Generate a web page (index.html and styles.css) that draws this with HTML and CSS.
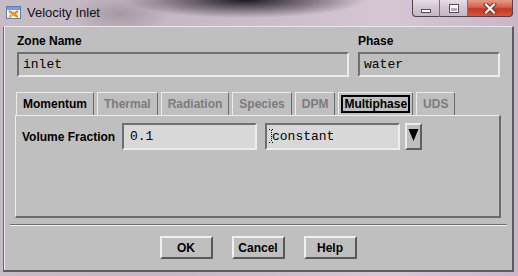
FILE: index.html
```html
<!DOCTYPE html>
<html lang="en">
<head>
  <meta charset="UTF-8" />
  <title>Velocity Inlet</title>
  <link rel="stylesheet" href="styles.css">
</head>
<body>
  <div class="titlebar">
    <svg class="app-icon" width="15" height="13" viewBox="0 0 15 13">
      <rect x="0.5" y="0.5" width="14" height="12" fill="#f4f4f4" stroke="#5a7fb0"/>
      <rect x="1" y="1" width="13" height="3" fill="#6fa0dc"/>
      <path d="M3 5 L12 11 M12 5 L3 11" stroke="#f08a1c" stroke-width="2.2"/>
      <path d="M3 11 L7 8" stroke="#f6c040" stroke-width="1.4"/>
    </svg>
    <span class="title">Velocity Inlet</span>
    <div class="caption">
      <div class="cap-btn cap-min"><span class="glyph-min"></span></div>
      <div class="cap-btn cap-max"><span class="glyph-max"></span></div>
      <div class="cap-btn cap-close">
        <svg width="14" height="11" viewBox="0 0 14 11">
          <path d="M3 1.5 L11 9.5 M11 1.5 L3 9.5" stroke="#6a2a20" stroke-width="4" stroke-linecap="square"/>
          <path d="M3 1.5 L11 9.5 M11 1.5 L3 9.5" stroke="#ffffff" stroke-width="2.2" stroke-linecap="square"/>
        </svg>
      </div>
    </div>
  </div>

  <div class="client">
    <div class="zone-row">
      <div class="group zone-group">
        <div class="label">Zone Name</div>
        <div class="field">inlet</div>
      </div>
      <div class="group phase-group">
        <div class="label">Phase</div>
        <div class="field">water</div>
      </div>
    </div>

    <div class="tabs">
      <div class="tab">Momentum</div>
      <div class="tab disabled">Thermal</div>
      <div class="tab disabled">Radiation</div>
      <div class="tab disabled">Species</div>
      <div class="tab disabled">DPM</div>
      <div class="tab focused"><span class="focus-ring">Multiphase</span></div>
      <div class="tab disabled">UDS</div>
    </div>

    <div class="tab-panel">
      <div class="vf-row">
        <div class="label vf-label">Volume Fraction</div>
        <div class="field light vf-input">0.1</div>
        <div class="field light vf-select">
          constant
          <svg class="ibeam" width="5" height="14" viewBox="0 0 5 14">
            <path d="M0 0.5 H2 M3 0.5 H5 M2.5 1 V13 M0 13.5 H2 M3 13.5 H5" stroke="#000" stroke-width="1" stroke-dasharray="1 1"/>
          </svg>
        </div>
        <div class="arrow-btn">
          <svg width="11" height="15" viewBox="0 0 11 15">
            <path d="M0.5 2 H10.5 L5.5 14 Z" fill="#000"/>
          </svg>
        </div>
      </div>
    </div>

    <div class="separator"></div>

    <div class="buttons">
      <button class="btn">OK</button>
      <button class="btn">Cancel</button>
      <button class="btn">Help</button>
    </div>
  </div>
</body>
</html>
```

FILE: styles.css
```css
* {
  box-sizing: border-box;
}
body {
  margin: 0;
  width: 518px;
  height: 276px;
  overflow: hidden;
  font-family: "Liberation Sans", Arial, sans-serif;
  display: flex;
  flex-direction: column;
  background:
    radial-gradient(ellipse 120px 18px at 245px 0, rgba(12, 8, 12, 0.9), rgba(12, 8, 12, 0)),
    radial-gradient(ellipse 50px 20px at 120px 14px, rgba(110, 95, 108, 0.35), rgba(110, 95, 108, 0)),
    linear-gradient(90deg, #c6bcc5 0%, #c4b6c2 30%, #cdbecb 55%, #d6c6d4 75%, #cbb6c8 100%);
}

/* title bar */
.titlebar {
  height: 26px;
  display: flex;
  align-items: center;
  padding: 0 5px 2px 6px;
}
.app-icon {
  margin-right: 6px;
  flex: none;
}
.title {
  font-size: 13px;
  color: #111;
}
.caption {
  margin-left: auto;
  align-self: flex-start;
  display: flex;
  height: 17px;
}
.cap-btn {
  height: 17px;
  display: flex;
  align-items: center;
  justify-content: center;
  border-bottom: 1px solid #4c424b;
}
.cap-min,
.cap-max {
  width: 28px;
  background: linear-gradient(#e7dde5, #d3c5d1 50%, #c6b6c4);
  border-right: 1px solid #7b6e79;
}
.cap-min {
  border-left: 1px solid #4c424b;
  border-bottom-left-radius: 4px;
}
.cap-close {
  width: 45px;
  background: linear-gradient(#e69a86, #d4604a 45%, #c4381f 55%, #d6563a);
  border-right: 1px solid #4c424b;
  border-bottom-right-radius: 4px;
}
.glyph-min {
  width: 10px;
  height: 4px;
  margin-top: 5px;
  background: #fff;
  border: 1px solid #4e4e5a;
}
.glyph-max {
  width: 10px;
  height: 9px;
  border: 1px solid #4e4e5a;
  box-shadow: inset 0 0 0 1px #fff, inset 0 2px 0 1px #fff;
  background: #b9aab7;
}

/* dialog client area */
.client {
  margin: 0 4px 0 3px;
  height: 246px;
  background: #bfbfbf;
  border-style: solid;
  border-width: 1px 2px 2px 1px;
  border-color: #e9e9e9 #5e5e5e #5e5e5e #6a6a6a;
  box-shadow: inset 1px 0 0 #ececec;
  padding: 7px 11px 0 11px;
  display: flex;
  flex-direction: column;
}
.label {
  font-size: 12px;
  font-weight: bold;
  line-height: 14px;
  color: #000;
}
.zone-row {
  display: flex;
  gap: 9px;
  padding: 0 1px 0 2px;
}
.zone-group {
  flex: 1;
}
.phase-group {
  width: 142px;
}
.group .label {
  margin-bottom: 4px;
}
.field {
  height: 25px;
  border: 2px solid;
  border-color: #6f6f6f #ececec #ececec #6f6f6f;
  padding: 0 4px;
  font-family: "Liberation Mono", "DejaVu Sans Mono", monospace;
  font-size: 13px;
  line-height: 21px;
  color: #000;
  background: #bfbfbf;
}
.field.light {
  background: #d8d8d8;
  height: 27px;
  line-height: 23px;
}

/* tabs */
.tabs {
  display: flex;
  gap: 3px;
  margin-top: 15px;
  padding-left: 1px;
}
.tab {
  height: 23px;
  padding: 0 6px;
  border: 1px solid;
  border-bottom: none;
  border-color: #ededed #6a6a6a #6a6a6a #ededed;
  border-top-right-radius: 2px;
  font-size: 12px;
  font-weight: bold;
  line-height: 22px;
  color: #000;
}
.tab.disabled {
  color: #7c7c7c;
}
.tab.focused {
  padding: 0 2px;
  display: flex;
  align-items: center;
}
.focus-ring {
  border: 2px solid #000;
  padding: 0 1px;
  line-height: 14px;
}
.tab-panel {
  height: 103px;
  border-style: solid;
  border-width: 1px 2px 2px 1px;
  border-color: #ededed #6a6a6a #6a6a6a #ededed;
  padding: 7px 0 0 6px;
}
.vf-row {
  display: flex;
  align-items: center;
}
.vf-label {
  flex: 0 0 100px;
}
.vf-input {
  width: 135px;
  padding-left: 6px;
}
.vf-select {
  position: relative;
  width: 135px;
  margin-left: 8px;
  padding-left: 5px;
}
.ibeam {
  position: absolute;
  left: 2px;
  top: 4px;
}
.arrow-btn {
  width: 17px;
  height: 27px;
  margin-left: 5px;
  border: 2px solid;
  border-color: #ececec #5e5e5e #5e5e5e #ececec;
  display: flex;
  align-items: flex-start;
  justify-content: center;
  padding-top: 2px;
}

.separator {
  height: 2px;
  margin: 6px -6px 0 -5px;
  border-top: 1px solid #6e6e6e;
  border-bottom: 1px solid #f2f2f2;
}

.buttons {
  display: flex;
  justify-content: center;
  gap: 19px;
  margin-top: 10px;
}
.btn {
  width: 53px;
  height: 23px;
  padding: 0;
  border: 2px solid;
  border-color: #f0f0f0 #5a5a5a #5a5a5a #f0f0f0;
  background: #bfbfbf;
  font-family: "Liberation Sans", Arial, sans-serif;
  font-size: 12px;
  font-weight: bold;
  color: #000;
}
```
